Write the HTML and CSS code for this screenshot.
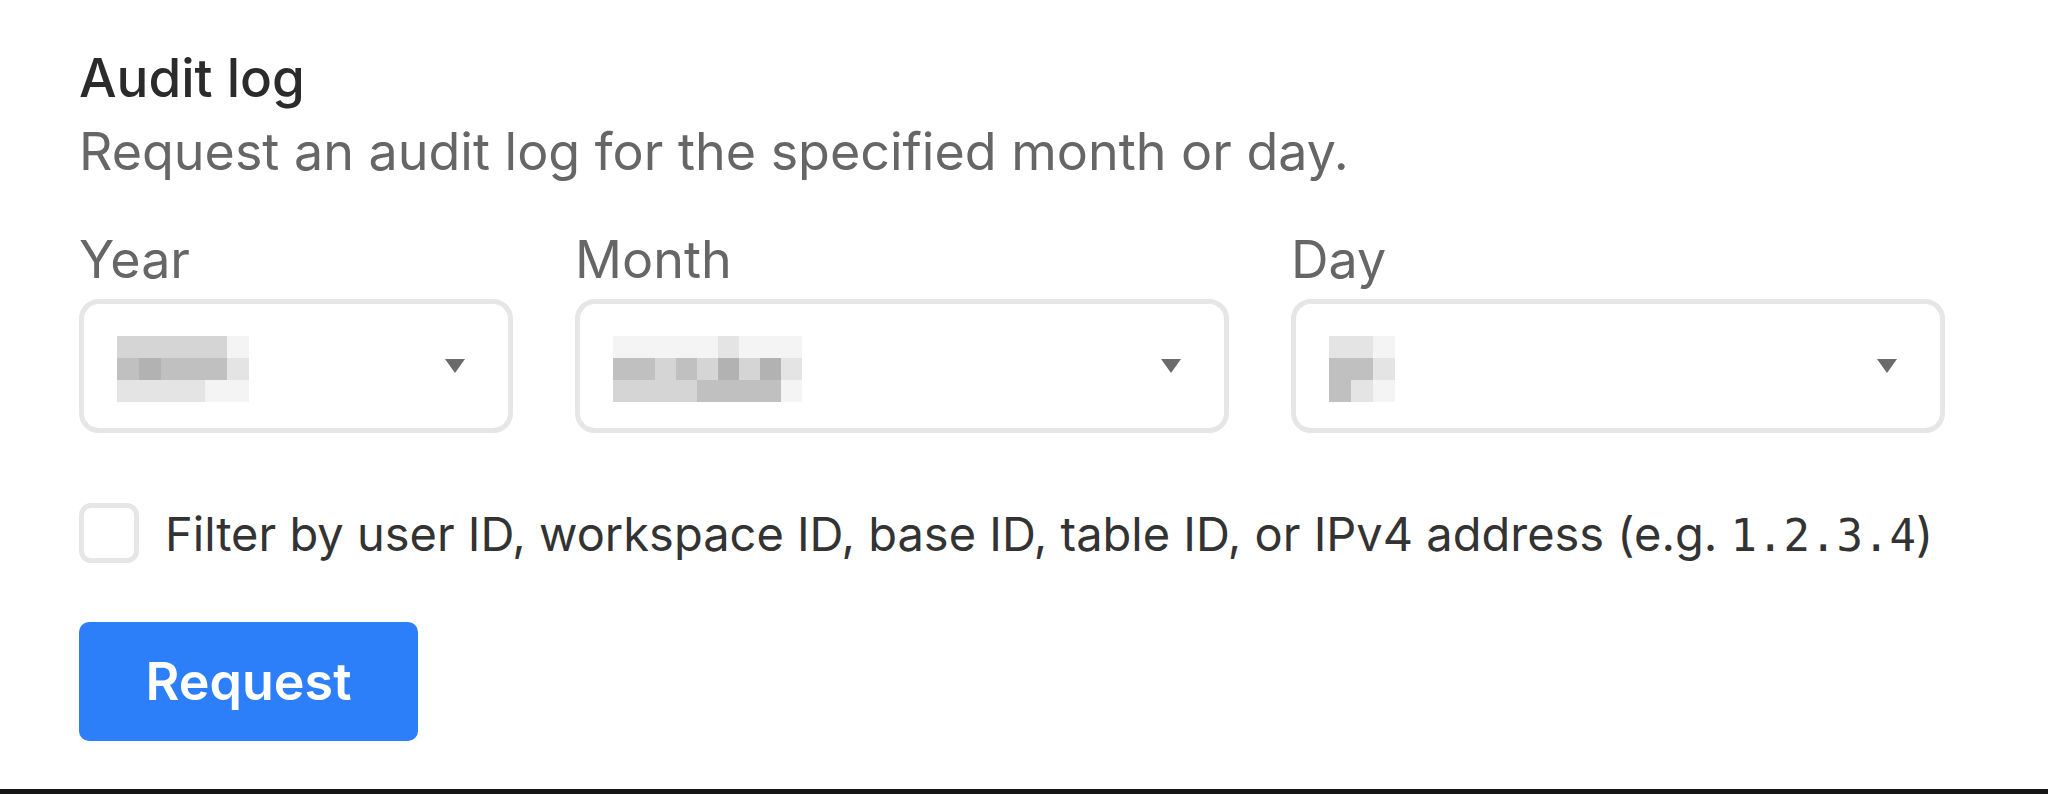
FILE: index.html
```html
<!DOCTYPE html>
<html>
<head>
<meta charset="UTF-8">
<title>Audit log</title>
<link rel="stylesheet" href="styles.css">
</head>
<body>

<div class="page">

  <h2 class="heading">Audit log</h2>
  <p class="subtitle">Request an audit log for the specified month or day.</p>

  <div class="fields">

    <div class="field">
      <div class="label">Year</div>
      <div class="select">
        <div class="mosaic cols6">
          <i class="p2"></i><i class="p2"></i><i class="p2"></i><i class="p2"></i><i class="p2"></i><i class="p0"></i>
          <i class="p3"></i><i class="p4"></i><i class="p3"></i><i class="p3"></i><i class="p3"></i><i class="p1"></i>
          <i class="p1"></i><i class="p1"></i><i class="p1"></i><i class="p1"></i><i class="p0"></i><i class="p0"></i>
        </div>
        <svg class="caret" width="22" height="16" viewBox="0 0 22 16"><polygon points="1,1 21,1 11,15"/></svg>
      </div>
    </div>

    <div class="field">
      <div class="label">Month</div>
      <div class="select">
        <div class="mosaic cols9">
          <i class="p0"></i><i class="p0"></i><i class="p0"></i><i class="p0"></i><i class="p0"></i><i class="p1"></i><i class="p0"></i><i class="p0"></i><i class="p0"></i>
          <i class="p3"></i><i class="p3"></i><i class="p2"></i><i class="p3"></i><i class="p2"></i><i class="p4"></i><i class="p2"></i><i class="p4"></i><i class="p1"></i>
          <i class="p2"></i><i class="p2"></i><i class="p2"></i><i class="p2"></i><i class="p3"></i><i class="p3"></i><i class="p3"></i><i class="p3"></i><i class="p0"></i>
        </div>
        <svg class="caret" width="22" height="16" viewBox="0 0 22 16"><polygon points="1,1 21,1 11,15"/></svg>
      </div>
    </div>

    <div class="field">
      <div class="label">Day</div>
      <div class="select">
        <div class="mosaic cols3">
          <i class="p1"></i><i class="p1"></i><i class="p0"></i>
          <i class="p3"></i><i class="p3"></i><i class="p1"></i>
          <i class="p3"></i><i class="p1"></i><i class="p0"></i>
        </div>
        <svg class="caret" width="22" height="16" viewBox="0 0 22 16"><polygon points="1,1 21,1 11,15"/></svg>
      </div>
    </div>

  </div>

  <label class="filter">
    <span class="checkbox"></span>
    <span>Filter by user ID, workspace ID, base ID, table ID, or IPv4 address (e.g. <code>1.2.3.4</code>)</span>
  </label>

  <button class="requestBtn">Request</button>

</div>

</body>
</html>
```

FILE: styles.css
```css
body{
  margin:0;
  background:#fff;
  font-family:Inter, "Noto Sans", sans-serif;
  color:#333;
}

.page{
  height:794px;
  box-sizing:border-box;
  padding:50px 0 0 79px;
  border-bottom:5px solid #161616;
}

.heading{
  margin:0;
  font-size:53px;
  font-weight:500;
  line-height:56px;
  color:#2b2b2b;
}

.subtitle{
  margin:16px 0 0;
  font-size:52px;
  line-height:60px;
  color:#666;
}

.fields{
  display:grid;
  grid-template-columns:434px 654px 654px;
  gap:62px;
  margin-top:48px;
}

.label{
  font-size:52px;
  line-height:60px;
  color:#666;
  margin-bottom:9px;
}

.select{
  height:134px;
  box-sizing:border-box;
  border:5px solid #e6e6e6;
  border-radius:20px;
  display:flex;
  align-items:center;
  justify-content:space-between;
  padding:0 42px 0 33px;
}

.caret{
  fill:#6b6b6b;
}

.mosaic{
  display:grid;
  grid-auto-rows:22px;
  margin-top:6px;
}

.cols3{ grid-template-columns:repeat(3,22px); }
.cols6{ grid-template-columns:repeat(6,22px); }
.cols9{ grid-template-columns:repeat(9,21px); }

.p0{ background:#f4f4f4; }
.p1{ background:#e4e4e4; }
.p2{ background:#d5d5d5; }
.p3{ background:#c0c0c0; }
.p4{ background:#b2b2b2; }

.filter{
  display:flex;
  align-items:center;
  gap:26px;
  margin-top:70px;
  font-size:47px;
  color:#333;
}

.checkbox{
  width:60px;
  height:60px;
  box-sizing:border-box;
  border:5px solid #e6e6e6;
  border-radius:12px;
  flex-shrink:0;
}

code{
  font-family:"DejaVu Sans Mono", monospace;
  font-size:44px;
}

.requestBtn{
  display:block;
  margin-top:59px;
  width:339px;
  height:119px;
  border:none;
  border-radius:10px;
  background:#2d7ff9;
  color:#fff;
  font-family:Inter, "Noto Sans", sans-serif;
  font-size:52px;
  font-weight:600;
}
```
